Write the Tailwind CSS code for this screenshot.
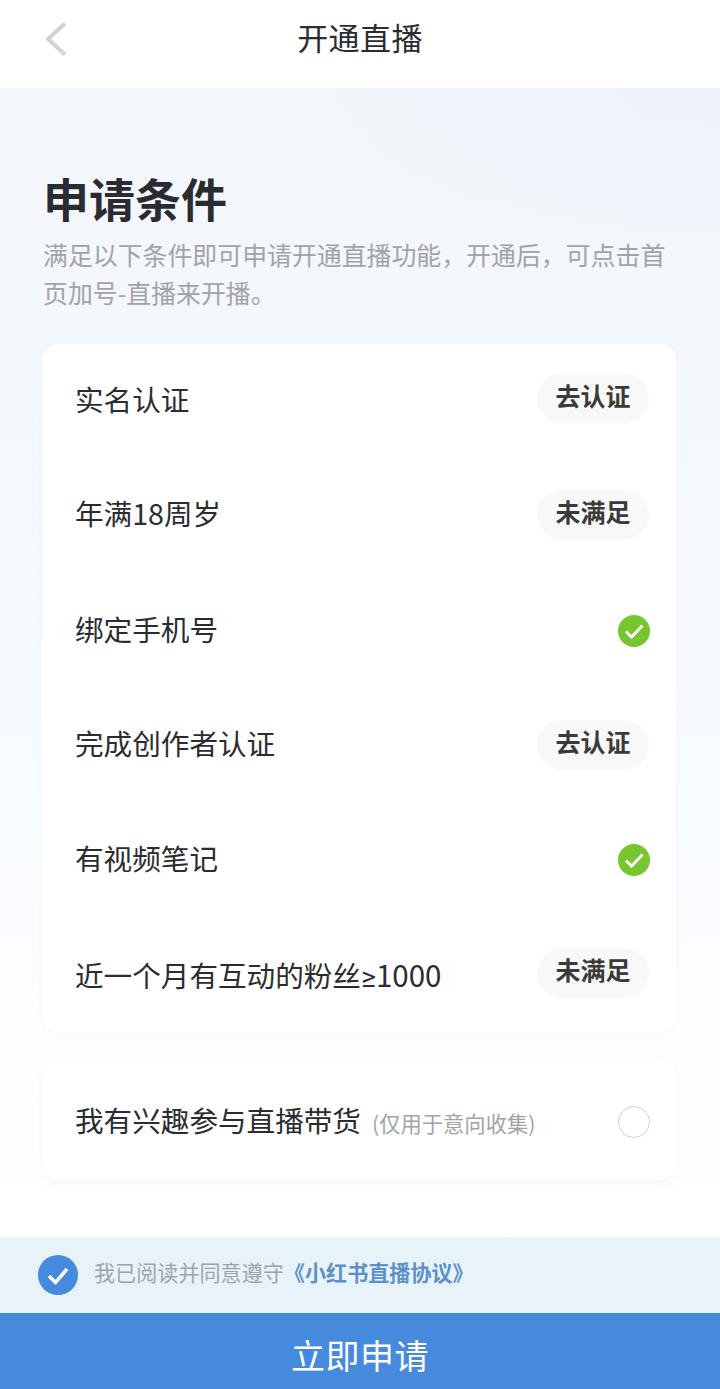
<!DOCTYPE html>
<html lang="zh-CN">
<head>
<meta charset="utf-8">
<script src="https://cdn.jsdelivr.net/npm/@tailwindcss/browser@4"></script>
</head>
<body class="m-0 bg-white">
<div class="w-[720px] h-[1389px] flex flex-col overflow-hidden text-[#2b2c30] font-['Noto_Sans_CJK_SC','Noto_Sans',sans-serif]">
  <header class="relative h-[88px] shrink-0 bg-white flex items-center justify-center">
    <svg class="absolute left-[44px] top-[21px]" width="24" height="36" viewBox="0 0 24 36" fill="none"><path d="M21 2.500 L4 18 L21 33.500" stroke="#d2d3d3" stroke-width="4"/></svg>
    <h1 class="text-[31px] leading-none font-normal tracking-[0.4px] -mt-[15px]">开通直播</h1>
  </header>
  <main class="relative h-[1149px] shrink-0 bg-gradient-to-b from-[#f3f6fb] via-[#f6faff] to-white px-[43px] pt-[84px]">
    <div class="absolute right-0 top-0 w-[420px] h-[180px] bg-[radial-gradient(ellipse_at_top_right,#edf1f9,transparent_70%)]"></div>
    <div class="relative">
      <h2 class="text-[46px] leading-[54px] font-bold -mt-[2px] text-[#2a2c31]">申请条件</h2>
      <p class="mt-[11px] text-[24.900px] leading-[38px] text-[#a0a4a9] w-[630px]">满足以下条件即可申请开通直播功能，开通后，可点击首页加号-直播来开播。</p>
      <section class="mt-[33px] -ml-[1px] w-[634px] h-[688px] bg-white rounded-[16px] shadow-[0_0_6px_rgba(235,241,249,0.4)] pl-[33px] pr-[26px] flex flex-col">
        <div class="h-[115px] flex items-center justify-between text-[28.600px]"><span class="-mt-[4px]">实名认证</span><span class="w-[112px] h-[50px] mr-[1px] -mt-[6px] pb-[6px] rounded-full bg-[#f8f8f8] flex items-center justify-center text-[25px] font-semibold text-[#3a3a3a]">去认证</span></div>
        <div class="h-[115px] flex items-center justify-between text-[28.600px]"><span class="-mt-[5px]">年满18周岁</span><span class="w-[112px] h-[50px] mr-[1px] -mt-[3px] pb-[6px] rounded-full bg-[#f8f8f8] flex items-center justify-center text-[25px] font-semibold text-[#3a3a3a]">未满足</span></div>
        <div class="h-[115px] flex items-center justify-between text-[28.600px]"><span class="-mt-[2px]">绑定手机号</span><svg width="32" height="32" viewBox="0 0 32 32"><circle cx="16" cy="16" r="16" fill="#76c72f"/><path d="M8 16.500 L13.500 22 L24.500 10.500" fill="none" stroke="#fff" stroke-width="3"/></svg></div>
        <div class="h-[115px] flex items-center justify-between text-[28.600px]"><span class="-mt-[4px]">完成创作者认证</span><span class="w-[112px] h-[50px] mr-[1px] pb-[7px] rounded-full bg-[#f8f8f8] flex items-center justify-center text-[25px] font-semibold text-[#3a3a3a]">去认证</span></div>
        <div class="h-[115px] flex items-center justify-between text-[28.600px]"><span class="-mt-[4px]">有视频笔记</span><svg width="32" height="32" viewBox="0 0 32 32"><circle cx="16" cy="16" r="16" fill="#76c72f"/><path d="M8 16.500 L13.500 22 L24.500 10.500" fill="none" stroke="#fff" stroke-width="3"/></svg></div>
        <div class="h-[115px] flex items-center justify-between text-[28.600px]"><span class="mt-[2px]">近一个月有互动的粉丝<span class="font-['Roboto']">≥</span><span class="text-[29.500px]">1000</span></span><span class="w-[112px] h-[50px] mr-[1px] -mt-[4px] pb-[6px] rounded-full bg-[#f8f8f8] flex items-center justify-center text-[25px] font-semibold text-[#3a3a3a]">未满足</span></div>
      </section>
      <section class="mt-[28px] -ml-[1px] w-[634px] h-[120px] bg-white rounded-[16px] shadow-[0_3px_6px_rgba(238,240,244,0.5)] pl-[33px] pr-[26px] flex items-center justify-between">
        <div class="flex items-baseline"><span class="text-[28.600px]">我有兴趣参与直播带货</span><span class="ml-[11px] text-[21.300px] text-[#a0a4a9]">(仅用于意向收集)</span></div>
        <span class="w-[32px] h-[32px] mt-[4px] rounded-full border border-[#cfd0d2] bg-white"></span>
      </section>
    </div>
  </main>
  <div class="h-[76px] shrink-0 bg-[#e8f3f9] flex items-center pl-[38px]">
    <svg width="40" height="40" viewBox="0 0 40 40"><circle cx="20" cy="20" r="20" fill="#468ade"/><path d="M11 21 L17.500 27.500 L29 14" fill="none" stroke="#fff" stroke-width="3.500"/></svg>
    <p class="ml-[16px] -mt-[4px] text-[21.100px] text-[#9ea3a9]">我已阅读并同意遵守<span class="font-bold text-[#5d8fca]">《小红书直播协议》</span></p>
  </div>
  <button class="h-[76px] shrink-0 bg-[#468ade] text-white text-[34px] tracking-[0.5px] pt-[6px] flex items-center justify-center">立即申请</button>
</div>
</body>
</html>
